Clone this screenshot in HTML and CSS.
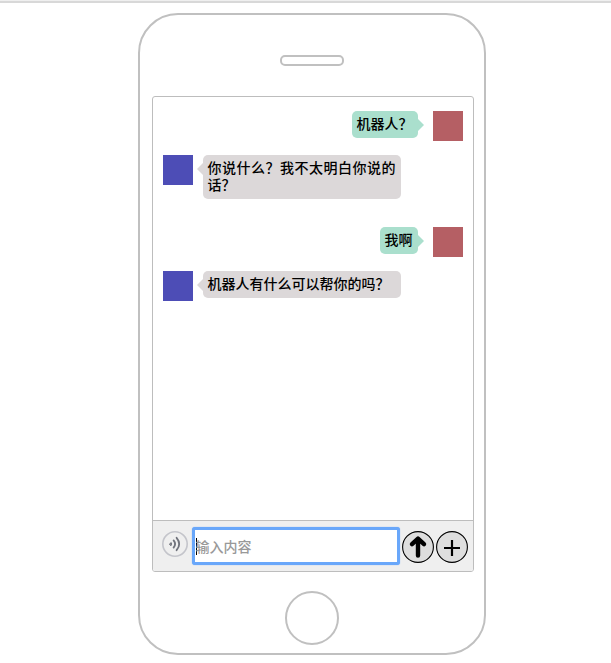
FILE: index.html
```html
<!DOCTYPE html>
<html lang="zh-CN">
<head>
<meta charset="utf-8">
<meta name="viewport" content="width=device-width, initial-scale=1">
<title>机器人</title>
<link rel="stylesheet" href="styles.css">
</head>
<body>
<main class="phone">
  <div class="speaker"></div>
  <section class="screen">
    <div class="messages">
      <div class="exchange">
        <div class="message message-user">
          <p class="bubble">机器人？</p>
          <div class="avatar"></div>
        </div>
        <div class="message message-robot">
          <div class="avatar"></div>
          <p class="bubble">你说什么？我不太明白你说的话？</p>
        </div>
      </div>
      <div class="exchange">
        <div class="message message-user">
          <p class="bubble">我啊</p>
          <div class="avatar"></div>
        </div>
        <div class="message message-robot">
          <div class="avatar"></div>
          <p class="bubble">机器人有什么可以帮你的吗？</p>
        </div>
      </div>
    </div>
    <form class="composer">
      <button class="voice" type="button" aria-label="语音">
        <svg viewBox="0 0 26 26" fill="none" stroke-linecap="round">
          <circle cx="13" cy="13" r="12.2" stroke="#c4c5cb" stroke-width="1.6"/>
          <path d="M7.6 13 L9.2 11.6 Q10 13 9.2 14.4 Z" fill="#70737c" stroke="#70737c"/>
          <path d="M11.6 9.4 Q14.6 13 11.6 16.6" stroke="#70737c" stroke-width="1.8"/>
          <path d="M14.6 6.8 Q19.8 13 14.6 19.2" stroke="#70737c" stroke-width="1.8"/>
        </svg>
      </button>
      <input class="field" type="text" placeholder="输入内容" aria-label="输入内容" autofocus>
      <button class="action" type="button" aria-label="发送">
        <svg viewBox="0 0 32 32" fill="none" stroke="#000">
          <circle cx="16" cy="16" r="15.4" fill="#dedede" stroke-width="1.1"/>
          <path d="M16 24.5 V9 M10 13.2 L16 7.6 L22 13.2" stroke-width="4.4" stroke-linecap="round" stroke-linejoin="round"/>
        </svg>
      </button>
      <button class="action" type="button" aria-label="更多">
        <svg viewBox="0 0 32 32" fill="none" stroke="#000">
          <circle cx="16" cy="16" r="15.4" fill="#dedede" stroke-width="1.1"/>
          <path d="M16 9 V25 M8 17 H24" stroke-width="2.2"/>
        </svg>
      </button>
    </form>
  </section>
  <div class="home"></div>
</main>
</body>
</html>
```
FILE: styles.css
```css
* {
  box-sizing: border-box;
}

body {
  margin: 0;
  padding: 10px 12px 8px 24px;
  border-top: 3px solid #dedede;
  border-image: linear-gradient(#efefef 1px, #d8d8d8 1px) 3 0 0;
  background: #fff;
  color: #000;
  font: 500 14px/17px "Noto Sans CJK SC", sans-serif;
}

.phone {
  display: flex;
  flex-direction: column;
  align-items: center;
  max-width: 348px;
  margin: 0 auto;
  padding: 40px 10px 8px;
  border: 2px solid #c0c0c0;
  border-radius: 40px;
}

.speaker {
  width: 64px;
  height: 11px;
  margin-bottom: 30px;
  border: 2px solid #c0c0c0;
  border-radius: 5px;
}

.screen {
  display: flex;
  flex-direction: column;
  align-self: stretch;
  margin: 0 0 19px 2px;
  border: 1px solid #bdbdbd;
  border-radius: 3px;
  overflow: hidden;
}

.messages {
  display: flex;
  flex-direction: column;
  gap: 28px;
  min-height: 423px;
  padding: 14px 10px;
}

.exchange {
  display: flex;
  flex-direction: column;
  gap: 14px;
}

.message {
  display: flex;
  align-items: flex-start;
}

.message-user {
  justify-content: flex-end;
  gap: 15px;
}

.message-robot {
  gap: 10px;
}

.avatar {
  flex: none;
  width: 30px;
  height: 30px;
  background: #4d4db6;
}

.message-user .avatar {
  background: #b55f64;
}

.bubble {
  position: relative;
  max-width: 198px;
  margin: 0;
  padding: 4px 5px 6px;
  border-radius: 5px;
  background: #dcd8d9;
  text-align: justify;
}

.message-robot .bubble {
  width: 198px;
}

.message-user .bubble {
  background: #aadfcd;
}

.bubble::before {
  content: "";
  position: absolute;
  top: 8px;
  right: 100%;
  border: 6px solid transparent;
  border-left-width: 0;
  border-right-color: #dcd8d9;
}

.message-user .bubble::before {
  right: auto;
  left: 100%;
  border-width: 6px 0 6px 6px;
  border-left-color: #aadfcd;
}

.composer {
  display: flex;
  align-items: center;
  gap: 2px;
  padding: 6px 5px 6px 9px;
  border-top: 1px solid #bdbdbd;
  background: #efefef;
}

button {
  flex: none;
  padding: 0;
  border: 0;
  background: none;
}

button svg {
  display: block;
  width: 100%;
}

.voice {
  width: 26px;
  margin: 0 2px 4px 0;
}

.action {
  width: 32px;
  margin-top: 1px;
}

.field {
  flex: 1;
  min-width: 0;
  height: 38px;
  padding: 0 1px;
  border: 3px solid #69a7fa;
  border-radius: 3px;
  outline: 0;
  box-shadow: 0 0 1px #69a7fa;
  background: linear-gradient(#000, #000) 1px center / 1px 17px no-repeat #fff;
  caret-color: transparent;
  font: inherit;
}

.field::placeholder {
  color: #999;
}

.home {
  width: 54px;
  height: 54px;
  border: 2px solid #c0c0c0;
  border-radius: 50%;
}
```
